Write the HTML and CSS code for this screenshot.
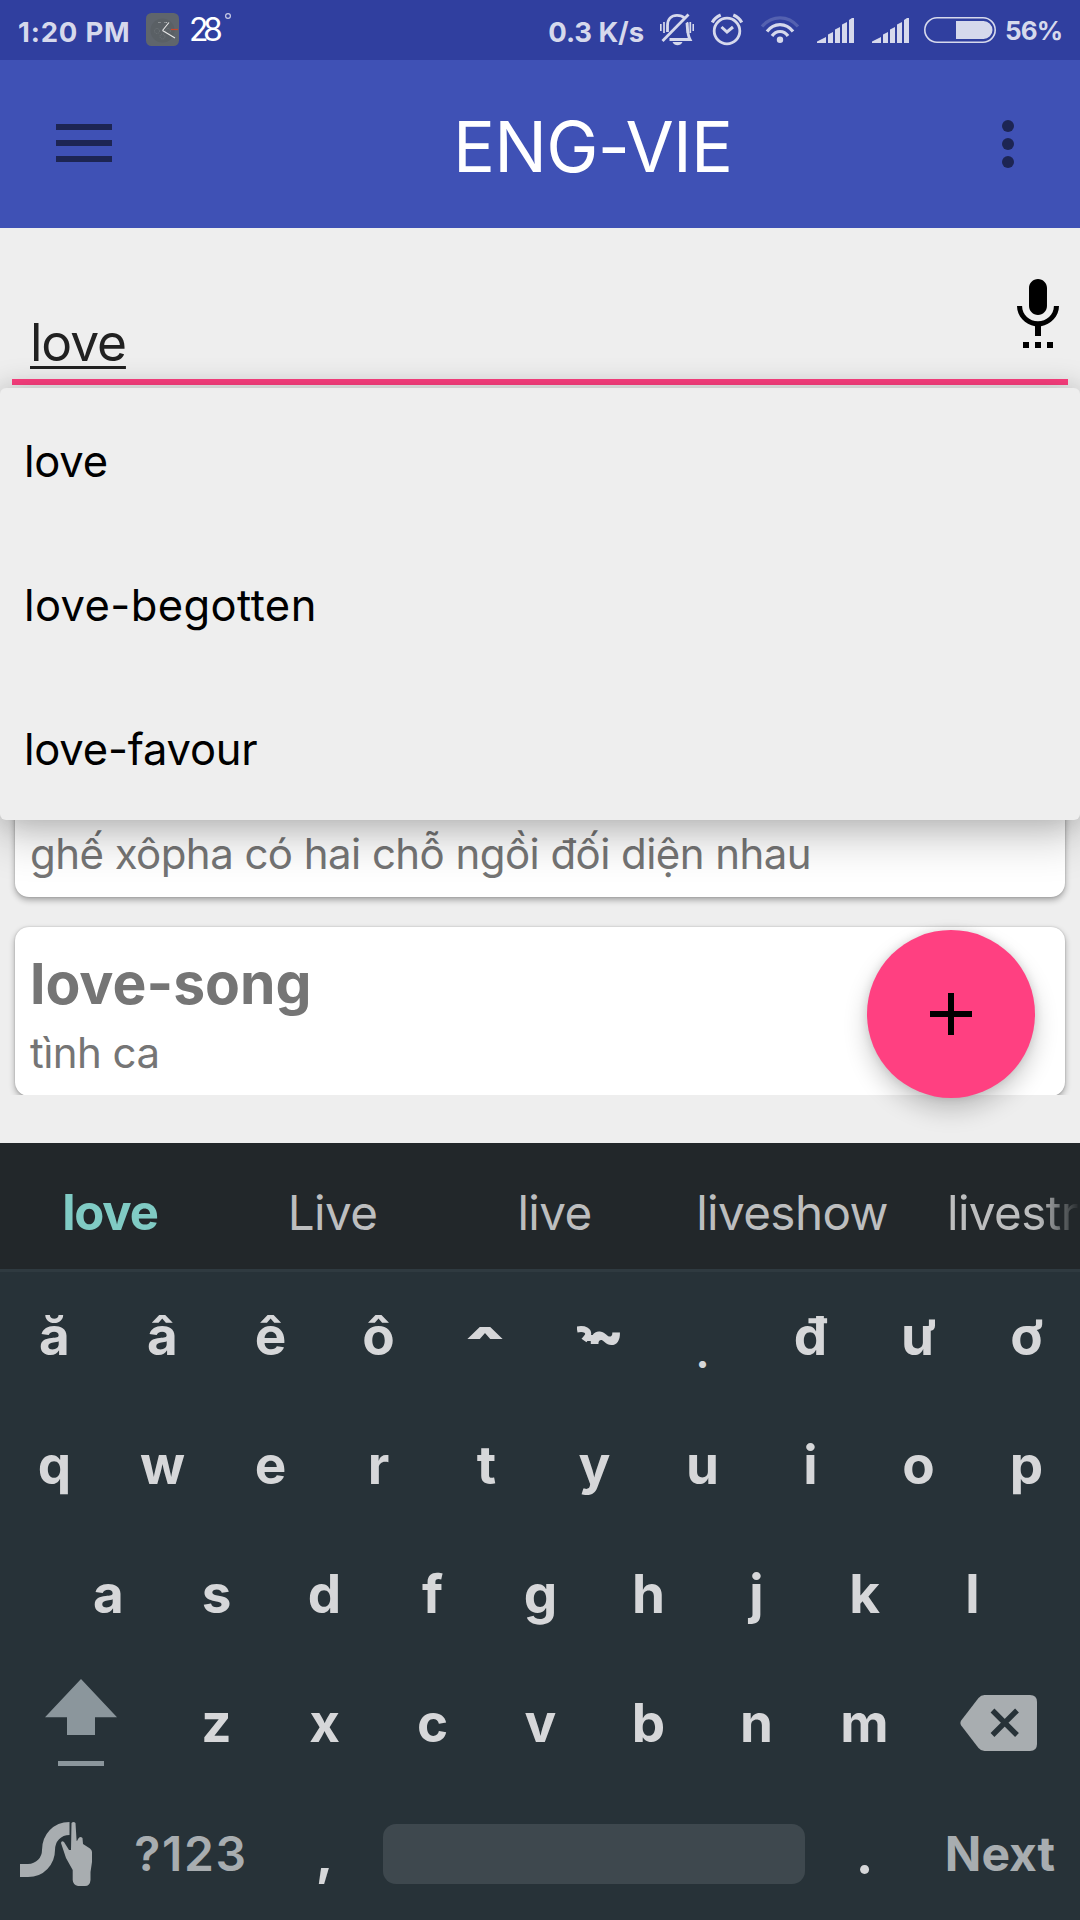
FILE: index.html
```html
<!DOCTYPE html>
<html lang="vi">
<head>
<meta charset="utf-8">
<title>ENG-VIE</title>
<link rel="stylesheet" href="styles.css">
</head>
<body>
<div class="screen">
  <div class="status">
    <span class="time">1:20 PM</span>
    <svg class="clock-app" width="33" height="33" viewBox="0 0 33 33">
      <rect width="33" height="33" rx="5.5" fill="#5f656c"/>
      <circle cx="16.5" cy="17.5" r="12" fill="#5a6065"/>
      <circle cx="11" cy="18" r="2.5" fill="none" stroke="#70767a" stroke-dasharray="1 1"/>
      <circle cx="22" cy="18" r="2.5" fill="none" stroke="#70767a" stroke-dasharray="1 1"/>
      <circle cx="16.500" cy="23.500" r="2.500" fill="none" stroke="#70767a" stroke-dasharray="1 1"/>
      <path d="M12.500 9.500h2M18.500 9.500h3" stroke="#b9bcbe" stroke-dasharray="1 .6"/>
      <path d="M16.500 17.500L23 9.500M16.500 17.500L29 25" stroke="#e8e8e8" stroke-width="1.100" fill="none"/>
      <path d="M25 16.500h7" stroke="#c9482c" stroke-width="1.200"/>
    </svg>
    <span class="temp">28</span>
    <svg class="degree" width="8" height="8" viewBox="0 0 8 8"><circle cx="4" cy="4" r="2.400" fill="none" stroke="#c9cce6" stroke-width="1.200"/></svg>
    <div class="indicators">
      <span class="speed">0.3 K/s</span>
      <svg class="bell" width="34" height="34" viewBox="660 13 34 34" fill="none" stroke="currentColor" stroke-width="2.800">
        <path d="M667.500 32V25.500C667.500 19 671.500 15.300 677 15.300C680 15.300 682.500 16 684.500 18M687 23C687.600 31 687.500 35 690 39.500H669.500"/>
        <path d="M688.500 14.500L662.500 41"/>
        <path d="M660.800 24V31M664 22V33M687.500 22V33M690.300 22V33M693.300 24V31" stroke-width="1.700"/>
        <path d="M672.500 42H682.500C681.500 44.300 679.500 45.200 677.500 45.200S673.500 44.300 672.500 42Z" fill="currentColor" stroke="none"/>
      </svg>
      <svg class="alarm" width="34" height="34" viewBox="710 13 34 34" fill="none" stroke="currentColor">
        <circle cx="727" cy="31" r="12.800" stroke-width="2.800"/>
        <path d="M721.500 27L727 32L733 27" stroke-width="3"/>
        <path d="M712.300 22.500C714 19 717 16.500 720.700 15M741.700 22.500C740 19 737 16.500 733.300 15" stroke-width="3.200"/>
      </svg>
      <svg class="wifi" width="40" height="28" viewBox="760 16 40 28" fill="none" stroke="currentColor" stroke-width="3.200">
        <path d="M762 26.500C772 15 788 15 798 26.500" opacity=".22"/>
        <path d="M767 31.500C774 22.300 786 22.300 793 31.500"/>
        <path d="M772 36C776 30 784 30 788 36"/>
        <circle cx="780" cy="39.800" r="3.200" fill="currentColor" stroke="none"/>
      </svg>
      <svg class="signal" width="38" height="26" viewBox="0 0 38 26" fill="currentColor"><path d="M0 25V23.500L9 19V25ZM11 25V16.500L16 14V25ZM18 25V11.500L23 9V25ZM25 25V6.500L30 4V25ZM32 25V2L35 0H37V25Z"/></svg>
      <svg class="signal" width="38" height="26" viewBox="0 0 38 26" fill="currentColor"><path d="M0 25V23.500L9 19V25ZM11 25V16.500L16 14V25ZM18 25V11.500L23 9V25ZM25 25V6.500L30 4V25ZM32 25V2L35 0H37V25Z"/></svg>
      <svg class="battery" width="72" height="26" viewBox="0 0 72 26"><rect x=".8" y=".8" width="70.400" height="24.400" rx="12.200" fill="none" stroke="currentColor" stroke-width="1.600"/><path d="M32 4H59.500A9 9 0 0 1 59.500 22H32Z" fill="currentColor"/></svg>
      <span class="percent">56%</span>
    </div>
  </div>

  <div class="appbar">
    <svg class="menu" width="56" height="38" viewBox="0 0 56 38" fill="currentColor"><path d="M0 0H56V6H0ZM0 16H56V22H0ZM0 32H56V38H0Z"/></svg>
    <h1 class="title">ENG-VIE</h1>
    <svg class="more" width="12" height="48" viewBox="0 0 12 48" fill="currentColor"><circle cx="6" cy="6" r="6"/><circle cx="6" cy="24" r="6"/><circle cx="6" cy="42" r="6"/></svg>
  </div>

  <div class="content">
    <div class="search">
      <div class="field"><span class="query">love</span></div>
      <svg class="mic" width="72" height="72" viewBox="0 0 24 24"><path d="M7 24h2v-2H7v2zm5-11c1.660 0 2.990-1.340 2.990-3L15 4c0-1.660-1.340-3-3-3S9 2.340 9 4v6c0 1.660 1.340 3 3 3zm-1 11h2v-2h-2v2zm4 0h2v-2h-2v2zm4-14h-1.700c0 3-2.540 5.100-5.300 5.100S6.700 13 6.700 10H5c0 3.410 2.720 6.230 6 6.720V20h2v-3.280c3.280-.49 6-3.310 6-6.720z"/></svg>
    </div>
    <div class="results">
      <div class="card">
        <p class="meaning">ghế xôpha có hai chỗ ngồi đối diện nhau</p>
      </div>
      <div class="card">
        <h2 class="word">love-song</h2>
        <p class="meaning">tình ca</p>
      </div>
    </div>
    <div class="dropdown">
      <div class="option">love</div>
      <div class="option wide">love-begotten</div>
      <div class="option">love-favour</div>
    </div>
    <div class="fab">
      <svg width="42" height="42" viewBox="0 0 42 42"><path d="M18 0H24V18H42V24H24V42H18V24H0V18H18Z"/></svg>
    </div>
  </div>

  <div class="keyboard">
    <div class="suggestions">
      <span class="s1">love</span><span class="s2">Live</span><span class="s3">live</span><span class="s4">liveshow</span><span class="s5">livestr</span>
    </div>
    <div class="row">
      <span>ă</span><span>â</span><span>ê</span><span>ô</span><span class="circumflex">ˆ</span><span class="tones"><svg width="18" height="18" viewBox="0 0 18 18"><path d="M0 3.500C8 2 12 5 11 9C10.500 11 9 11.500 7 14.500M8 12H17" fill="none" stroke="currentColor" stroke-width="6"/></svg>~</span><span class="dot-below">.</span><span>đ</span><span>ư</span><span>ơ</span>
    </div>
    <div class="row">
      <span>q</span><span>w</span><span>e</span><span>r</span><span>t</span><span>y</span><span>u</span><span>i</span><span>o</span><span>p</span>
    </div>
    <div class="row inset">
      <span>a</span><span>s</span><span>d</span><span>f</span><span>g</span><span>h</span><span>j</span><span>k</span><span>l</span>
    </div>
    <div class="row">
      <div class="side shift"><svg width="72" height="88" viewBox="0 0 72 88" fill="currentColor"><path d="M36 0L72 38.300H50V56H22V38.300H0ZM13 82H59V87H13Z"/></svg></div>
      <span>z</span><span>x</span><span>c</span><span>v</span><span>b</span><span>n</span><span>m</span>
      <div class="side back"><svg width="78" height="56" viewBox="0 0 78 56"><path d="M24.500 0H70Q77 0 77 7V49Q77 56 70 56H24.500Q21 56 18.500 53L1.200 30.500Q-.4 28 1.200 25.500L18.500 3Q21 0 24.500 0Z" fill="currentColor"/><path d="M32.500 15.500L57 40M57 15.500L32.500 40" stroke="#273238" stroke-width="5.400"/></svg></div>
    </div>
    <div class="row bottom">
      <div class="glide"><svg width="74" height="66" viewBox="20 1822 74 66"><path d="M20 1870.500H28C40 1870.500 48.500 1861 48.500 1850C48.500 1838 57 1828.500 69.500 1828.500" fill="none" stroke="currentColor" stroke-width="13"/><path d="M71.500 1823Q73.500 1821 75.500 1823L76.600 1841Q77.500 1841 78 1839Q80 1835.500 82.500 1838L83 1844L90 1848.500Q92 1850 92 1852V1862L90.500 1872V1880Q90 1886 85 1886H78Q73 1885 72.700 1880V1870L66 1858L61 1843Q61.500 1840 64 1842L69 1850H71Z" fill="currentColor"/></svg></div>
      <b class="symbols">?123</b>
      <span class="comma">,</span>
      <div class="space"></div>
      <span class="period">.</span>
      <b class="next">Next</b>
    </div>
  </div>
</div>
</body>
</html>
```
FILE: styles.css
```css
* { box-sizing: border-box; margin: 0; padding: 0; }
body { font-family: Inter, "Noto Sans", sans-serif; background: #eee; }
svg { display: block; flex: none; }
.screen { width: 1080px; height: 1920px; display: flex; flex-direction: column; overflow: hidden; }

.status { height: 60px; flex: none; display: flex; align-items: flex-start; padding-left: 18px; background: #303f9f; color: #d6d9ec; line-height: 60px; white-space: nowrap; }
.time, .speed { font-size: 27.5px; font-weight: 700; padding-top: 2px; }
.time { width: 128px; letter-spacing: .8px; }
.clock-app { margin-top: 13px; }
.temp { width: 45px; padding-left: 10px; font-size: 32px; font-weight: 400; letter-spacing: -5.4px; color: #fff; }
.degree { margin-top: 12px; }
.indicators { display: flex; margin-left: auto; padding-right: 18px; }
.speed { letter-spacing: -.1px; }
.bell { margin: 13px 0 0 16px; }
.alarm { margin: 13px 0 0 16px; }
.wifi { margin: 16px 0 0 16px; }
.signal { margin: 18px 0 0 17px; }
.battery { margin: 17px 0 0 14px; }
.percent { width: 57px; margin-left: 9px; padding-top: 1px; font-size: 26px; font-weight: 700; letter-spacing: -.9px; }

.appbar { height: 168px; flex: none; display: flex; align-items: center; padding: 0 66px 0 56px; background: #3f51b5; color: #1d2553; }
.menu { margin-bottom: 2px; }
.title { flex: 1; margin-left: 341px; padding-top: 4px; font-size: 70px; font-weight: 400; letter-spacing: -.8px; color: #fff; }

.content { position: relative; height: 915px; flex: none; overflow: hidden; background: #eee; }
.search { position: relative; height: 160px; padding: 0 12px; }
.field { height: 157px; padding: 84px 18px 0; border-bottom: 6px solid #ff4081; }
.query { font-size: 51.5px; line-height: 60px; letter-spacing: -1.1px; color: #212121; text-decoration: underline; text-decoration-thickness: 3px; text-underline-offset: 5px; text-decoration-skip-ink: none; }
.mic { position: absolute; right: 6px; top: 48px; }

.results { height: 707px; padding: 340px 15px 0; display: flex; flex-direction: column; gap: 30px; overflow: hidden; }
.card { height: 169px; flex: none; display: flex; flex-direction: column; justify-content: flex-end; padding: 0 15px 18px; border-radius: 14px; background: #fff; color: #757575; box-shadow: 0 3px 6px rgba(0,0,0,.32), 0 0 2px rgba(0,0,0,.2); }
.word { margin: 0 0 12px; font-size: 57px; line-height: 64px; font-weight: 700; }
.meaning { font-size: 42px; line-height: 50px; letter-spacing: -.56px; white-space: nowrap; }

.dropdown { position: absolute; left: 0; top: 160px; width: 1080px; height: 432px; border-radius: 6px; background: #eee; color: #000; box-shadow: 0 24px 40px rgba(0,0,0,.16), 0 0 30px rgba(0,0,0,.22); }
.option { height: 144px; padding: 1px 24px 0; font-size: 43.5px; line-height: 144px; letter-spacing: -.2px; }
.option.wide { letter-spacing: .4px; }

.fab { position: absolute; left: 867px; top: 702px; width: 168px; height: 168px; border-radius: 50%; display: flex; align-items: center; justify-content: center; background: #ff4081; box-shadow: 0 12px 24px rgba(0,0,0,.2), 0 0 10px rgba(0,0,0,.12); }

.keyboard { flex: 1; background: #273238; color: #d6d7d9; }
.suggestions { height: 129px; display: flex; padding-top: 7px; border-bottom: 3px solid #2f3a40; background: #22272a; font-size: 47.6px; line-height: 126px; letter-spacing: -.6px; text-align: center; color: #bdbebf; overflow: hidden; }
.suggestions span { flex: none; height: 119px; }
.s1 { width: 220px; font-size: 49px; font-weight: 700; letter-spacing: -1.1px; color: #80cbc4; }
.s2 { width: 225px; }
.s3 { width: 219px; }
.s4 { width: 256px; }
.s5 { width: 160px; padding-left: 27px; overflow: hidden; text-align: left; -webkit-mask-image: linear-gradient(90deg, #000 118px, transparent 160px); mask-image: linear-gradient(90deg, #000 118px, transparent 160px); }

.row { height: 129px; display: flex; font-size: 53px; font-weight: 700; line-height: 129px; text-align: center; }
.row span { width: 108px; flex: none; padding-left: 1px; }
.inset { padding: 0 54px; }
.row .circumflex { font-size: 76px; font-weight: 900; padding: 22px 2px 0 0; }
.row .tones { display: flex; padding-left: 37px; font-weight: 900; line-height: 127px; }
.tones svg { margin: 54px -8px 0 0; }
.row .dot-below { font-size: 42px; padding-top: 16px; }
.side { width: 162px; display: flex; justify-content: center; align-items: flex-start; }
.shift { color: #8b969c; padding-top: 20px; }
.back { color: #a8adb0; padding-top: 36px; }
.bottom { align-items: flex-start; }
.glide { width: 112px; padding: 34px 0 0 20px; color: #a8adb0; }
.symbols, .next { font-size: 48px; font-weight: 600; color: #a8adb0; padding-top: 1px; }
.symbols { width: 158px; letter-spacing: 1.7px; }
.comma, .period { padding-top: 3px; }
.space { width: 422px; height: 60px; margin: 36px 5px 0; border-radius: 13px; background: #3e484e; }
.next { width: 162px; padding-left: 2px; letter-spacing: 0; font-weight: 700; }
```
